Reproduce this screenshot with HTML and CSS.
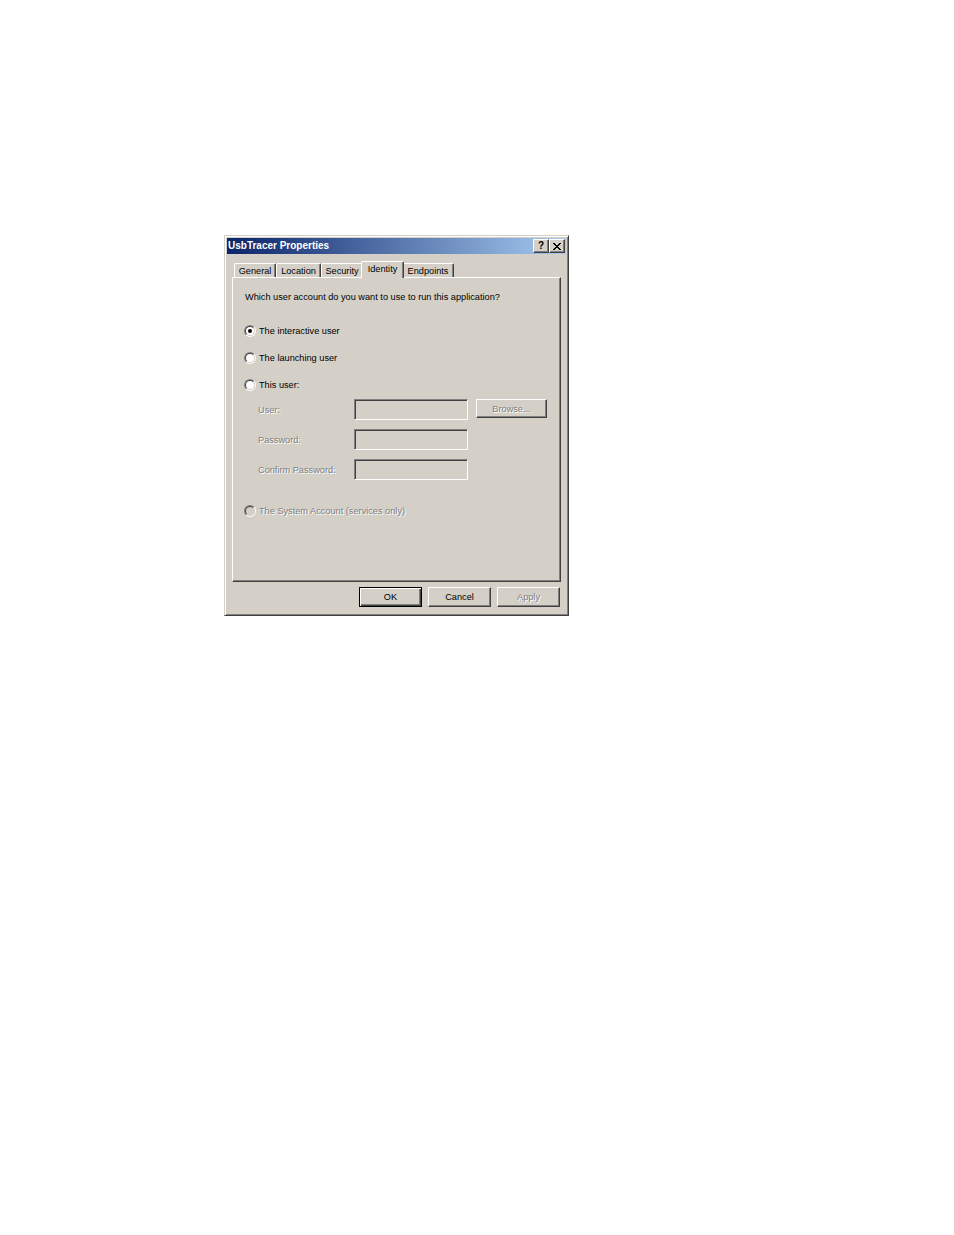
FILE: index.html
```html
<!DOCTYPE html>
<html>
<head>
<meta charset="utf-8">
<title>UsbTracer Properties</title>
<link rel="stylesheet" href="styles.css">
</head>
<body>
<div class="dialog">
  <div class="titlebar">
    <span class="title">UsbTracer Properties</span>
    <div class="tbtns">
      <span class="tbtn help">?</span>
      <span class="tbtn close"><svg width="8" height="7" viewBox="0 0 8 7" shape-rendering="crispEdges"><path d="M0 0h2v1h1v1h2V1h1V0h2v1H7v1H6v1H5v1h1v1h1v1h1v1H6V6H5V5H3v1H2v1H0V6h1V5h1V4h1V3H2V2H1V1H0z" fill="#000"/></svg></span>
    </div>
  </div>
  <div class="client">
    <div class="tabs">
      <div class="tab t-general">General</div>
      <div class="tab t-location">Location</div>
      <div class="tab t-security">Security</div>
      <div class="tab t-identity selected">Identity</div>
      <div class="tab t-endpoints">Endpoints</div>
    </div>
    <div class="panel">
      <div class="question">Which user account do you want to use to run this application?</div>
      <div class="radio-row first">
        <span class="radio"><span class="radio-in"><span class="dot"></span></span></span>
        <span class="label">The interactive user</span>
      </div>
      <div class="radio-row">
        <span class="radio"><span class="radio-in"></span></span>
        <span class="label">The launching user</span>
      </div>
      <div class="radio-row">
        <span class="radio"><span class="radio-in"></span></span>
        <span class="label">This user:</span>
      </div>
      <div class="field-row first">
        <span class="flabel disabled">User:</span>
        <span class="input"></span>
        <span class="btn browse disabled">Browse...</span>
      </div>
      <div class="field-row">
        <span class="flabel disabled">Password:</span>
        <span class="input"></span>
      </div>
      <div class="field-row">
        <span class="flabel disabled">Confirm Password:</span>
        <span class="input"></span>
      </div>
      <div class="radio-row system">
        <span class="radio"><span class="radio-in off"></span></span>
        <span class="label disabled">The System Account (services only)</span>
      </div>
    </div>
    <div class="buttons">
      <span class="btn default">OK</span>
      <span class="btn">Cancel</span>
      <span class="btn disabled">Apply</span>
    </div>
  </div>
</div>
</body>
</html>
```
FILE: styles.css
```css
* { box-sizing: border-box; }
html, body { margin: 0; padding: 0; background: #fff; }
body {
  padding: 235px 0 0 224px;
  font-family: "Liberation Sans", Arial, sans-serif;
  font-size: 9.2px;
  color: #000;
}
.dialog {
  width: 345px;
  height: 381px;
  background: #d4d0c8;
  border: 1px solid;
  border-color: #d4d0c8 #404040 #404040 #d4d0c8;
  box-shadow: inset 1px 1px #fff, inset -1px -1px #808080;
  padding: 2px;
}
.titlebar {
  height: 16px;
  display: flex;
  align-items: center;
  justify-content: space-between;
  background: linear-gradient(to right, #0a246a, #a6caf0);
  padding: 0 1px 0 1px;
}
.title {
  color: #fff;
  font-weight: bold;
  font-size: 10px;
  line-height: 12px;
}
.tbtns { display: flex; }
.tbtn {
  width: 16px;
  height: 14px;
  background: #d4d0c8;
  border: 1px solid;
  border-color: #fff #404040 #404040 #fff;
  box-shadow: inset -1px -1px #808080;
  display: flex;
  align-items: center;
  justify-content: center;
}
.tbtn.help {
  font-weight: bold;
  font-size: 10px;
  line-height: 10px;
}
.client { padding: 0 5px 0 5px; }
.tabs {
  display: flex;
  align-items: flex-end;
  height: 16px;
  margin-top: 7px;
  padding-left: 2px;
}
.tab {
  height: 14px;
  border-top: 1px solid #fff;
  border-left: 1px solid #fff;
  border-right: 1px solid #404040;
  box-shadow: inset -1px 0 #808080;
  border-radius: 2px 2px 0 0;
  display: flex;
  align-items: center;
  justify-content: center;
  line-height: 12px;
  background: #d4d0c8;
}
.t-general { width: 42px; }
.t-location { width: 45px; }
.t-security { width: 42px; }
.t-identity { width: 39px; }
.t-endpoints { width: 52px; }
.tab.selected {
  width: 43px;
  height: 17px;
  margin: 0 -2px -1px;
  position: relative;
  z-index: 1;
  align-items: flex-start;
  padding-top: 1px;
}
.panel {
  height: 305px;
  border: 1px solid;
  border-color: #fff #404040 #404040 #fff;
  box-shadow: inset -1px -1px #808080;
  padding: 13px 0 0 11px;
}
.question { line-height: 12px; margin-left: 1px; }
.radio-row {
  display: flex;
  align-items: center;
  gap: 3px;
  height: 13px;
  margin-top: 14px;
  line-height: 12px;
}
.radio-row.first { margin-top: 21px; }
.radio-row.system { margin-top: 24px; }
.radio {
  flex: none;
  width: 12px;
  height: 12px;
  border-radius: 50%;
  border: 1px solid;
  border-color: #808080 #fff #fff #808080;
}
.radio-in {
  width: 10px;
  height: 10px;
  border-radius: 50%;
  border: 1px solid;
  border-color: #404040 #d4d0c8 #d4d0c8 #404040;
  background: #fff;
  display: flex;
  align-items: center;
  justify-content: center;
}
.radio-in.off { background: #d4d0c8; }
.dot { width: 4px; height: 4px; border-radius: 50%; background: #000; }
.disabled { color: #808080; text-shadow: 1px 1px 0 #fff; }
.field-row {
  display: flex;
  align-items: center;
  margin-left: 14px;
  margin-top: 9px;
  height: 21px;
}
.field-row.first { margin-top: 8px; }
.flabel { width: 96px; flex: none; line-height: 12px; }
.input {
  width: 114px;
  height: 21px;
  flex: none;
  border: 1px solid;
  border-color: #808080 #fff #fff #808080;
  box-shadow: inset 1px 1px #404040, inset -1px -1px #d4d0c8;
  background: #d4d0c8;
}
.btn {
  width: 63px;
  height: 20px;
  flex: none;
  border: 1px solid;
  border-color: #fff #404040 #404040 #fff;
  box-shadow: inset -1px -1px #808080;
  display: flex;
  align-items: center;
  justify-content: center;
  line-height: 12px;
}
.btn.browse {
  width: 71px;
  height: 19px;
  margin-left: 8px;
  align-self: flex-start;
}
.btn.default {
  border-color: #000;
  box-shadow: inset 1px 1px #fff, inset -1px -1px #404040, inset -2px -2px #808080;
}
.buttons {
  display: flex;
  justify-content: flex-end;
  gap: 6px;
  margin-top: 5px;
  padding-right: 1px;
}
```
